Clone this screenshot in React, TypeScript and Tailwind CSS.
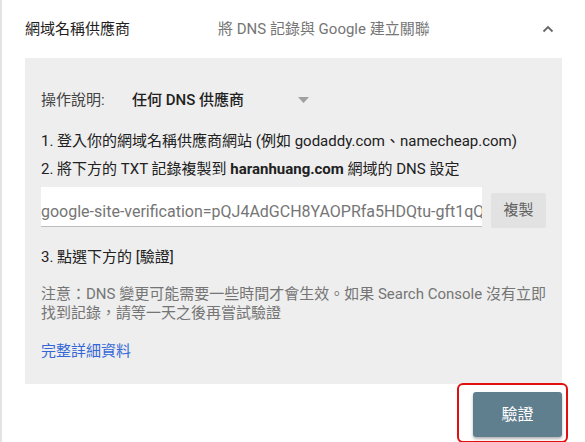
import React from "react";

const font = { fontFamily: 'Roboto, "Noto Sans CJK TC", sans-serif' };

const ChevronUp = () => (
    <svg width="12" height="8" viewBox="0 0 12 8" className="text-[#666666]">
        <path d="M1.5 6.5 L6 2 L10.5 6.5" fill="none" stroke="currentColor" strokeWidth="1.8" />
    </svg>
);

const App = () => {
    return (
        <div className="h-[442px] w-[585px] overflow-hidden bg-white" style={font}>
            <div className="h-full border-l-2 border-[#e3e3e3] pr-[23px] pl-[23px]">
                <div className="flex h-[58px] items-center">
                    <span className="w-[193px] text-[15px] text-[#212121]">網域名稱供應商</span>
                    <span className="flex-1 text-[15px] text-[#757575]">將 DNS 記錄與 Google 建立關聯</span>
                    <span className="mr-[8px] flex items-center">
                        <ChevronUp />
                    </span>
                </div>
                <div className="bg-[#eeeeee] px-4 pt-[30px] pb-[21px]">
                    <div className="flex h-6 items-center text-[15px]">
                        <span className="w-[91px] text-[#424242]">操作說明:</span>
                        <span className="w-[166px] font-medium text-[#212121]">任何 DNS 供應商</span>
                        <svg width="11" height="6" viewBox="0 0 11 6">
                            <path d="M0 0 L11 0 L5.5 6 Z" fill="#a0a0a0" />
                        </svg>
                    </div>
                    <div className="mt-[15px] text-[15px] leading-[28px] text-[#212121]">
                        <p>1. 登入你的網域名稱供應商網站 (例如 godaddy.com、namecheap.com)</p>
                        <p>
                            2. 將下方的 TXT 記錄複製到 <span className="font-bold">haranhuang.com</span> 網域的 DNS 設定
                        </p>
                    </div>
                    <div className="mt-[4px] flex items-end gap-[9px]">
                        <div className="flex h-[40px] w-[441px] items-end overflow-hidden border-b border-[#bdbdbd] bg-white pb-[2px]">
                            <span className="whitespace-nowrap text-[16px] text-[#757575]">
                                google-site-verification=pQJ4AdGCH8YAOPRfa5HDQtu-gft1qQ
                            </span>
                        </div>
                        <button className="mb-[-1px] h-[35px] w-[55px] rounded-[2px] bg-[#e2e2e2] text-[15px] text-[#616161]">
                            複製
                        </button>
                    </div>
                    <p className="mt-[16px] text-[15px] leading-[28px] text-[#212121]">3. 點選下方的 [驗證]</p>
                    <p className="mt-[14px] text-[15px] leading-[19px] text-[#757575]">
                        注意：DNS 變更可能需要一些時間才會生效。如果 Search Console 沒有立即找到記錄，請等一天之後再嘗試驗證
                    </p>
                    <p className="mt-[16px] text-[15px] leading-[24px] text-[#3367d6]">完整詳細資料</p>
                </div>
                <div className="-mt-px flex justify-end">
                    <div className="mr-[-6px] rounded-[6px] border-2 border-[#e01010] pt-[7px] pr-[4px] pb-[4px] pl-[14px]">
                        <button className="h-[45px] w-[89px] rounded-[3px] bg-[#5f7e8e] text-[16px] text-white shadow-[0_2px_3px_rgba(0,0,0,0.3)]">
                            驗證
                        </button>
                    </div>
                </div>
            </div>
        </div>
    );
};

export default App;
